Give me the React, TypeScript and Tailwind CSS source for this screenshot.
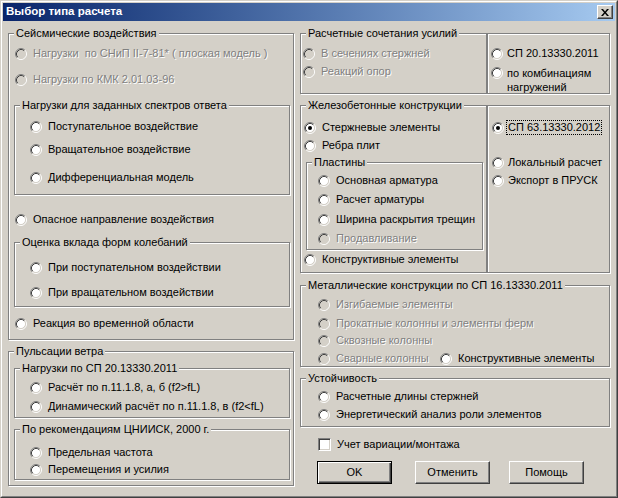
import React from 'react';

type RadioProps = {
  label: React.ReactNode;
  checked?: boolean;
  disabled?: boolean;
  focus?: boolean;
  className?: string;
  gap?: string;
};

function RadioGlyph({ checked, disabled }: { checked?: boolean; disabled?: boolean }) {
  return (
    <svg width="12" height="12" viewBox="0 0 12 12" className="shrink-0">
      <circle cx="6" cy="6" r="4.5" fill={disabled ? '#d4d0c8' : '#ffffff'} />
      <path d="M2.11 9.89A5.5 5.5 0 0 1 9.89 2.11" stroke="#808080" fill="none" />
      <path d="M9.89 2.11A5.5 5.5 0 0 1 2.11 9.89" stroke="#ffffff" fill="none" />
      <path d="M2.82 9.18A4.5 4.5 0 0 1 9.18 2.82" stroke="#404040" fill="none" />
      <path d="M9.18 2.82A4.5 4.5 0 0 1 2.82 9.18" stroke="#d4d0c8" fill="none" />
      {checked && <circle cx="6" cy="6" r="2" fill="#000000" />}
    </svg>
  );
}

function Radio({ label, checked, disabled, focus, className = '', gap = 'gap-[6px]' }: RadioProps) {
  return (
    <div className={`flex h-[13px] items-center ${gap} ${className}`}>
      <RadioGlyph checked={checked} disabled={disabled} />
      <span
        className={`whitespace-pre leading-[13px] ${
          disabled ? 'text-[#808080] [text-shadow:1px_1px_0_#ffffff]' : 'text-black'
        } ${focus ? 'border border-dotted border-black px-[1px]' : ''}`}
      >
        {label}
      </span>
    </div>
  );
}

function Group({
  label,
  className = '',
  children,
}: {
  label?: string;
  className?: string;
  children?: React.ReactNode;
}) {
  return (
    <div
      className={`relative flex flex-col border border-[#808080] shadow-[inset_1px_1px_0_#ffffff,1px_1px_0_#ffffff] ${className}`}
    >
      {label && (
        <span className="absolute -top-[7px] left-[5px] whitespace-nowrap bg-[#d4d0c8] px-[2px] leading-[13px] text-black">
          {label}
        </span>
      )}
      {children}
    </div>
  );
}

function Button({ children, isDefault, className = '' }: { children: React.ReactNode; isDefault?: boolean; className?: string }) {
  return (
    <div
      className={`flex h-[23px] w-[75px] items-center justify-center ${
        isDefault
          ? 'border border-black shadow-[inset_1px_1px_0_#ffffff,inset_-1px_-1px_0_#404040,inset_-2px_-2px_0_#808080]'
          : 'border border-t-white border-l-white border-b-[#404040] border-r-[#404040] shadow-[inset_-1px_-1px_0_#808080]'
      } ${className}`}
    >
      {children}
    </div>
  );
}

export default function App() {
  return (
    <div className="h-[498px] w-[618px] border border-t-[#d4d0c8] border-l-[#d4d0c8] border-b-[#404040] border-r-[#404040] font-['Liberation_Sans',Arial,sans-serif] text-[11px] text-black">
      <div className="flex h-full w-full flex-col border border-t-white border-l-white border-b-[#808080] border-r-[#808080] bg-[#d4d0c8] p-[1px]">
        {/* title bar */}
        <div className="flex h-[18px] shrink-0 items-center justify-between bg-gradient-to-r from-[#0a246a] to-[#a6caf0] pl-[3px] pr-[2px]">
          <span className="text-[11.5px] font-bold text-white">Выбор типа расчета</span>
          <div className="flex h-[14px] w-[16px] items-center justify-center border border-t-white border-l-white border-b-[#404040] border-r-[#404040] bg-[#d4d0c8] shadow-[inset_-1px_-1px_0_#808080]">
            <svg width="8" height="7" viewBox="0 0 8 7">
              <path d="M0 0h2l2 2.5L6 0h2L5 3.5 8 7H6L4 4.5 2 7H0l3-3.5z" fill="#000000" />
            </svg>
          </div>
        </div>

        <div className="flex gap-[6px] pl-[5px] pt-[12px]">
          {/* left column */}
          <div className="flex w-[286px] flex-col">
            <Group label="Сейсмические воздействия" className="h-[307px] w-[286px]">
              <Radio disabled className="ml-[6px] mt-[13px]" label="Нагрузки  по СНиП II-7-81* ( плоская модель )" />
              <Radio disabled className="ml-[6px] mt-[13px]" label="Нагрузки по КМК 2.01.03-96" />
              <Group label="Нагрузки для заданных спектров ответа" className="ml-[5px] mt-[19px] h-[90px] w-[276px]">
                <Radio className="ml-[15px] mt-[14px]" label="Поступательное воздействие" />
                <Radio className="ml-[15px] mt-[10px]" label="Вращательное воздействие" />
                <Radio className="ml-[15px] mt-[15px]" label="Дифференциальная модель" />
              </Group>
              <Radio className="ml-[6px] mt-[18px]" label="Опасное направление воздействия" />
              <Group label="Оценка вклада форм колебаний" className="ml-[5px] mt-[16px] h-[65px] w-[276px]">
                <Radio className="ml-[15px] mt-[18px]" label="При поступательном воздействии" />
                <Radio className="ml-[15px] mt-[12px]" label="При вращательном воздействии" />
              </Group>
              <Radio className="ml-[6px] mt-[10px]" label="Реакция во временной области" />
            </Group>

            <Group label="Пульсации ветра" className="mt-[11px] h-[135px] w-[286px]">
              <Group label="Нагрузки по СП 20.13330.2011" className="ml-[5px] mt-[16px] h-[50px] w-[276px]">
                <Radio className="ml-[15px] mt-[12px]" label="Расчёт по п.11.1.8, а, б (f2>fL)" />
                <Radio className="ml-[15px] mt-[6px]" label="Динамический расчёт по п.11.1.8, в (f2<fL)" />
              </Group>
              <Group label="По рекомендациям ЦНИИСК, 2000 г." className="ml-[5px] mt-[11px] h-[51px] w-[276px]">
                <Radio className="ml-[15px] mt-[16px]" label="Предельная частота" />
                <Radio className="ml-[15px] mt-[4px]" label="Перемещения и усилия" />
              </Group>
            </Group>
          </div>

          {/* right column */}
          <div className="flex w-[310px] flex-col">
            <div className="flex h-[61px]">
              <Group label="Расчетные сочетания усилий" className="h-full w-[187px]">
                <Radio disabled className="ml-[2px] mt-[13px]" label="В сечениях стержней" />
                <Radio disabled className="ml-[2px] mt-[5px]" label="Реакций опор" />
              </Group>
              <Group className="h-full w-[123px]">
                <Radio gap="gap-[4px]" className="ml-[3px] mt-[13px]" label="СП 20.13330.2011" />
                <div className="ml-[3px] mt-[6px] flex items-start gap-[4px]">
                  <div className="flex h-[13px] items-center">
                    <RadioGlyph />
                  </div>
                  <span className="leading-[14px]">
                    по комбинациям
                    <br />
                    нагружений
                  </span>
                </div>
              </Group>
            </div>

            <div className="mt-[11px] flex h-[168px]">
              <Group label="Железобетонные конструкции" className="h-full w-[187px]">
                <Radio checked className="ml-[3px] mt-[15px]" label="Стержневые элементы" />
                <Radio className="ml-[3px] mt-[5px]" label="Ребра плит" />
                <Group label="Пластины" className="ml-[5px] mt-[10px] h-[88px] w-[177px]">
                  <Radio className="ml-[11px] mt-[11px]" label="Основная арматура" />
                  <Radio className="ml-[11px] mt-[6px]" label="Расчет арматуры" />
                  <Radio className="ml-[11px] mt-[7px]" label="Ширина раскрытия трещин" />
                  <Radio disabled className="ml-[11px] mt-[6px]" label="Продавливание" />
                </Group>
                <Radio className="ml-[3px] mt-[3px]" label="Конструктивные элементы" />
              </Group>
              <Group className="h-full w-[123px]">
                <Radio checked focus gap="gap-[2px]" className="ml-[4px] mt-[15px]" label="СП 63.13330.2012" />
                <Radio gap="gap-[4px]" className="ml-[4px] mt-[22px]" label="Локальный расчет" />
                <Radio gap="gap-[4px]" className="ml-[4px] mt-[5px]" label="Экспорт в ПРУСК" />
              </Group>
            </div>

            <Group label="Металлические конструкции по СП 16.13330.2011" className="mt-[12px] h-[82px] w-[310px]">
              <Radio disabled className="ml-[17px] mt-[12px]" label="Изгибаемые элементы" />
              <Radio disabled className="ml-[17px] mt-[6px]" label="Прокатные колонны и элементы ферм" />
              <Radio disabled className="ml-[17px] mt-[4px]" label="Сквозные колонны" />
              <div className="ml-[17px] mt-[5px] flex">
                <Radio disabled className="w-[122px]" label="Сварные колонны" />
                <Radio label="Конструктивные элементы" />
              </div>
            </Group>

            <Group label="Устойчивость" className="mt-[11px] h-[49px] w-[310px]">
              <Radio className="ml-[17px] mt-[11px]" label="Расчетные длины стержней" />
              <Radio className="ml-[17px] mt-[5px]" label="Энергетический анализ роли элементов" />
            </Group>

            <div className="ml-[18px] mt-[11px] flex h-[13px] items-center gap-[6px]">
              <div className="h-[13px] w-[13px] border border-t-[#808080] border-l-[#808080] border-b-white border-r-white bg-white shadow-[inset_1px_1px_0_#404040,inset_-1px_-1px_0_#d4d0c8]" />
              <span className="leading-[13px]">Учет вариации/монтажа</span>
            </div>

            <div className="ml-[17px] mt-[10px] flex">
              <Button isDefault>OK</Button>
              <Button className="ml-[23px]">Отменить</Button>
              <Button className="ml-[19px]">Помощь</Button>
            </div>
          </div>
        </div>
      </div>
    </div>
  );
}
